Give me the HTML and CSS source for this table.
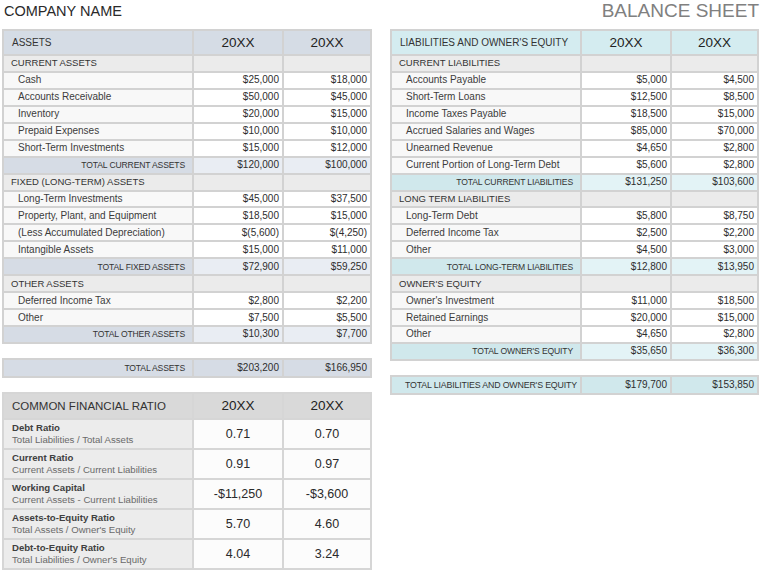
FILE: index.html
```html
<!DOCTYPE html>
<html>
<head>
<meta charset="utf-8">
<link rel="stylesheet" href="styles.css">
</head>
<body>
<div class="page">
  <header class="top">
    <div class="company">COMPANY NAME</div>
    <div class="title">BALANCE SHEET</div>
  </header>
  <div class="cols">
    <div class="col left">
      <table class="sheet blue">
        <colgroup><col class="c1"><col class="c2"><col class="c3"></colgroup>
        <tr class="hd"><td class="lab">ASSETS</td><td class="yr">20XX</td><td class="yr">20XX</td></tr>
        <tr class="sec"><td>CURRENT ASSETS</td><td></td><td></td></tr>
        <tr class="item"><td>Cash</td><td>$25,000</td><td>$18,000</td></tr>
        <tr class="item"><td>Accounts Receivable</td><td>$50,000</td><td>$45,000</td></tr>
        <tr class="item"><td>Inventory</td><td>$20,000</td><td>$15,000</td></tr>
        <tr class="item"><td>Prepaid Expenses</td><td>$10,000</td><td>$10,000</td></tr>
        <tr class="item"><td>Short-Term Investments</td><td>$15,000</td><td>$12,000</td></tr>
        <tr class="tot"><td>TOTAL CURRENT ASSETS</td><td>$120,000</td><td>$100,000</td></tr>
        <tr class="sec"><td>FIXED (LONG-TERM) ASSETS</td><td></td><td></td></tr>
        <tr class="item"><td>Long-Term Investments</td><td>$45,000</td><td>$37,500</td></tr>
        <tr class="item"><td>Property, Plant, and Equipment</td><td>$18,500</td><td>$15,000</td></tr>
        <tr class="item"><td>(Less Accumulated Depreciation)</td><td>$(5,600)</td><td>$(4,250)</td></tr>
        <tr class="item"><td>Intangible Assets</td><td>$15,000</td><td>$11,000</td></tr>
        <tr class="tot"><td>TOTAL FIXED ASSETS</td><td>$72,900</td><td>$59,250</td></tr>
        <tr class="sec"><td>OTHER ASSETS</td><td></td><td></td></tr>
        <tr class="item"><td>Deferred Income Tax</td><td>$2,800</td><td>$2,200</td></tr>
        <tr class="item"><td>Other</td><td>$7,500</td><td>$5,500</td></tr>
        <tr class="tot"><td>TOTAL OTHER ASSETS</td><td>$10,300</td><td>$7,700</td></tr>
      </table>
      <table class="sheet blue grand">
        <colgroup><col class="c1"><col class="c2"><col class="c3"></colgroup>
        <tr class="tot"><td>TOTAL ASSETS</td><td>$203,200</td><td>$166,950</td></tr>
      </table>
      <table class="ratio">
        <colgroup><col class="c1"><col class="c2"><col class="c3"></colgroup>
        <tr class="rhd"><td class="lab">COMMON FINANCIAL RATIO</td><td class="yr">20XX</td><td class="yr">20XX</td></tr>
        <tr><td class="rl"><b>Debt Ratio</b><span>Total Liabilities / Total Assets</span></td><td>0.71</td><td>0.70</td></tr>
        <tr><td class="rl"><b>Current Ratio</b><span>Current Assets / Current Liabilities</span></td><td>0.91</td><td>0.97</td></tr>
        <tr><td class="rl"><b>Working Capital</b><span>Current Assets - Current Liabilities</span></td><td>-$11,250</td><td>-$3,600</td></tr>
        <tr><td class="rl"><b>Assets-to-Equity Ratio</b><span>Total Assets / Owner's Equity</span></td><td>5.70</td><td>4.60</td></tr>
        <tr><td class="rl"><b>Debt-to-Equity Ratio</b><span>Total Liabilities / Owner's Equity</span></td><td>4.04</td><td>3.24</td></tr>
      </table>
    </div>
    <div class="col right">
      <table class="sheet teal">
        <colgroup><col class="c1"><col class="c2"><col class="c3"></colgroup>
        <tr class="hd"><td class="lab">LIABILITIES AND OWNER'S EQUITY</td><td class="yr">20XX</td><td class="yr">20XX</td></tr>
        <tr class="sec"><td>CURRENT LIABILITIES</td><td></td><td></td></tr>
        <tr class="item"><td>Accounts Payable</td><td>$5,000</td><td>$4,500</td></tr>
        <tr class="item"><td>Short-Term Loans</td><td>$12,500</td><td>$8,500</td></tr>
        <tr class="item"><td>Income Taxes Payable</td><td>$18,500</td><td>$15,000</td></tr>
        <tr class="item"><td>Accrued Salaries and Wages</td><td>$85,000</td><td>$70,000</td></tr>
        <tr class="item"><td>Unearned Revenue</td><td>$4,650</td><td>$2,800</td></tr>
        <tr class="item"><td>Current Portion of Long-Term Debt</td><td>$5,600</td><td>$2,800</td></tr>
        <tr class="tot"><td>TOTAL CURRENT LIABILITIES</td><td>$131,250</td><td>$103,600</td></tr>
        <tr class="sec"><td>LONG TERM LIABILITIES</td><td></td><td></td></tr>
        <tr class="item"><td>Long-Term Debt</td><td>$5,800</td><td>$8,750</td></tr>
        <tr class="item"><td>Deferred Income Tax</td><td>$2,500</td><td>$2,200</td></tr>
        <tr class="item"><td>Other</td><td>$4,500</td><td>$3,000</td></tr>
        <tr class="tot"><td>TOTAL LONG-TERM LIABILITIES</td><td>$12,800</td><td>$13,950</td></tr>
        <tr class="sec"><td>OWNER'S EQUITY</td><td></td><td></td></tr>
        <tr class="item"><td>Owner's Investment</td><td>$11,000</td><td>$18,500</td></tr>
        <tr class="item"><td>Retained Earnings</td><td>$20,000</td><td>$15,000</td></tr>
        <tr class="item"><td>Other</td><td>$4,650</td><td>$2,800</td></tr>
        <tr class="tot"><td>TOTAL OWNER'S EQUITY</td><td>$35,650</td><td>$36,300</td></tr>
      </table>
      <table class="sheet teal grand">
        <colgroup><col class="c1"><col class="c2"><col class="c3"></colgroup>
        <tr class="tot"><td>TOTAL LIABILITIES AND OWNER'S EQUITY</td><td>$179,700</td><td>$153,850</td></tr>
      </table>
    </div>
  </div>
</div>
</body>
</html>
```
FILE: styles.css
```css
* { box-sizing: border-box; }
body {
  margin: 0;
  background: #ffffff;
  font-family: "Liberation Sans", Arial, sans-serif;
  color: #3a3a3a;
}
.page {
  width: 763px;
  height: 571px;
  padding: 0 4px 0 2px;
}
.top {
  height: 29px;
  display: flex;
  justify-content: space-between;
  align-items: flex-start;
}
.company {
  font-size: 14.5px;
  color: #2a2a2a;
  padding: 3px 0 0 2px;
  line-height: 16px;
}
.title {
  font-size: 19px;
  color: #808080;
  line-height: 20px;
  padding-top: 1px;
}
.cols {
  display: flex;
  gap: 18px;
}
.col { display: flex; flex-direction: column; }
.col.left { width: 370px; }
.col.right { width: 369px; }

table { border-collapse: collapse; table-layout: fixed; width: 100%; }
col.c1 { width: 190px; }
col.c2 { width: 90px; }
col.c3 { width: auto; }

.sheet {
  border: 2px solid #c6c6c6;
}
.sheet td {
  height: 16.95px;
  padding: 0 3px;
  font-size: 10px;
  line-height: 12px;
  white-space: nowrap;
  border: 2px solid #d2d2d2;
  text-align: right;
  color: #2e2e2e;
  overflow: hidden;
}
.sheet .hd td { height: 25px; }
.sheet .hd .lab {
  text-align: left;
  padding-left: 8px;
  font-size: 10px;
  color: #333;
}
.sheet .hd .yr {
  text-align: center;
  font-size: 13.5px;
  color: #222;
}
.blue .hd td { background: #d5dce5; }
.teal .hd td { background: #d4ecf0; }

.sheet .sec td {
  background: #ebebeb;
  text-align: left;
  padding-left: 7px;
  font-size: 9.5px;
  color: #333;
}
.sheet .item td {
  background: #ffffff;
  border-bottom: 1px dashed #b8b8b8;
}
.sheet .item td:first-child {
  text-align: left;
  padding-left: 14px;
  background: #f8f8f8;
  color: #3c3c3c;
}
.sheet .tot td:first-child {
  font-size: 8.6px;
  letter-spacing: -0.15px;
  padding-right: 7px;
  color: #333;
}
.blue .tot td:first-child { background: #d6dce5; }
.blue .tot td { background: #e9edf3; }
.teal .tot td:first-child { background: #d0e8ec; }
.teal .tot td { background: #e3f3f6; }

.grand { margin-top: 14px; }
.grand .tot td { height: 18px; }
.blue.grand .tot td { background: #d6dce5; }
.teal.grand .tot td { background: #d0e8ec; }
.teal.grand .tot td:first-child { padding-right: 3px; font-size: 8.8px; }

.ratio {
  margin-top: 14px;
  border: 2px solid #c8c8c8;
}
.ratio td {
  border: 2px solid #d6d6d6;
  height: 30px;
  text-align: center;
  font-size: 12.5px;
  color: #2a2a2a;
  background: #fcfcfc;
}
.ratio .rhd td {
  height: 26px;
  background: #d9d9d9;
}
.ratio .rhd .lab {
  text-align: left;
  padding-left: 8px;
  font-size: 11.5px;
  color: #333;
}
.ratio .rhd .yr {
  font-size: 13.5px;
  color: #222;
}
.ratio .rl {
  background: #ececec;
  text-align: left;
  padding-left: 8px;
  font-size: 9.6px;
  line-height: 12px;
}
.ratio .rl b {
  display: block;
  color: #404040;
}
.ratio .rl span {
  display: block;
  color: #6a6a6a;
}
```
